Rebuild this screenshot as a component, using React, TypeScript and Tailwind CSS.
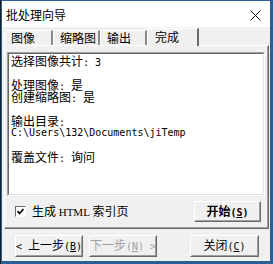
import React from "react";

// ascii runs use a half-width mono face, like the bitmap system font
function A({ children }: { children: React.ReactNode }) {
    return <span className="font-['DejaVu_Sans_Mono',monospace] text-[10px]">{children}</span>;
}

function U({ children }: { children: React.ReactNode }) {
    return <span className="underline underline-offset-[1px]">{children}</span>;
}

function Raised({ className, children }: { className?: string; children: React.ReactNode }) {
    return (
        <div className={"border border-t-white border-l-white border-r-[#696969] border-b-[#696969] bg-[#f0f0f0] " + (className ?? "")}>
            <div className="w-full h-full border border-t-[#f0f0f0] border-l-[#f0f0f0] border-r-[#a0a0a0] border-b-[#a0a0a0] flex items-center justify-center whitespace-nowrap">
                {children}
            </div>
        </div>
    );
}

const tabs = [
    { name: "图像", w: "w-[49px]" },
    { name: "缩略图", w: "w-[47px]" },
    { name: "输出", w: "w-[47px]" },
];

export default function App() {
    return (
        <div className="w-[273px] h-[264px] border-l border-[#1c1c1c] font-['Noto_Sans_CJK_SC',sans-serif] text-[12px] leading-[12px] text-black">
            <div className="w-full h-full flex flex-col border-l border-t border-r-[3px] border-b-[3px] border-[#2b5f93] bg-[#f0f0f0]">
                {/* title bar */}
                <div className="h-[26px] bg-white flex items-center justify-between pl-[4px] pr-[9px] shrink-0">
                    <span className="text-[12px] pt-[1px]">批处理向导</span>
                    <svg width="11" height="11" viewBox="0 0 11 11" className="mt-[2px]">
                        <path d="M0.5 0.5 L10.5 10.5 M10.5 0.5 L0.5 10.5" stroke="#111" strokeWidth="1" />
                    </svg>
                </div>

                {/* tab control */}
                <div className="ml-[2px] mr-[1px] mt-[1px] flex flex-col">
                    <div className="h-[17px] flex items-end">
                        {tabs.map((t) => (
                            <div key={t.name} className={t.w + " h-[15px] pl-[6px] flex items-center border-t border-l border-t-white border-l-white border-r-2 border-r-[#8a8a8a]"}>
                                {t.name}
                            </div>
                        ))}
                        <div className="w-[52px] h-[18px] pl-[7px] pb-[2px] flex items-center bg-[#f0f0f0] border-t border-l border-t-white border-l-white border-r-2 border-r-[#696969] -mb-px relative z-10">
                            完成
                        </div>
                    </div>

                    <div className="h-[184px] border border-t-white border-l-white border-r-[#696969] border-b-[#696969]">
                        <div className="w-full h-full border-r border-b border-r-[#a0a0a0] border-b-[#a0a0a0] flex flex-col">
                            {/* edit box */}
                            <div className="ml-[2px] mr-[2px] mt-[6px] h-[144px] border border-t-[#a0a0a0] border-l-[#a0a0a0] border-r-white border-b-white">
                                <div className="w-full h-full border border-t-[#696969] border-l-[#696969] border-r-[#e3e3e3] border-b-[#e3e3e3] bg-white pl-[2px] pt-[1px] flex flex-col">
                                    <div className="h-[12px]">选择图像共计<A>: 3</A></div>
                                    <div className="h-[12px]" />
                                    <div className="h-[12px]">处理图像<A>: </A>是</div>
                                    <div className="h-[12px]">创建缩略图<A>: </A>是</div>
                                    <div className="h-[12px]" />
                                    <div className="h-[12px]">输出目录<A>:</A></div>
                                    <div className="h-[12px] flex items-center"><A>C:\Users\132\Documents\jiTemp</A></div>
                                    <div className="h-[12px]" />
                                    <div className="h-[12px]">覆盖文件<A>: </A>询问</div>
                                </div>
                            </div>

                            {/* checkbox + start */}
                            <div className="mt-[5px] flex items-center justify-between pl-[10px] pr-[6px]">
                                <div className="flex items-center gap-[6px]">
                                    <div className="w-[11px] h-[11px] border border-t-[#696969] border-l-[#696969] border-r-white border-b-white bg-white flex items-center justify-center">
                                        <svg width="7" height="7" viewBox="0 0 7 7">
                                            <path d="M0.5 3 L2.5 5.5 L6.5 1" stroke="#000" strokeWidth="1.6" fill="none" />
                                        </svg>
                                    </div>
                                    <span className="whitespace-nowrap">生成 <span className="font-['Liberation_Serif',serif] text-[11px]">HTML</span> 索引页</span>
                                </div>
                                <Raised className="w-[67px] h-[21px]">
                                    <span className="font-bold">开始<A>(<U>S</U>)</A></span>
                                </Raised>
                            </div>
                        </div>
                    </div>
                </div>

                {/* bottom buttons */}
                <div className="mt-[6px] flex items-center pl-[13px] pr-[11px]">
                    <Raised className="w-[68px] h-[22px]">
                        <span><A>&lt; </A>上一步<A>(<U>B</U>)</A></span>
                    </Raised>
                    <Raised className="w-[68px] h-[22px] ml-[6px]">
                        <span className="text-[#a0a0a0]">下一步<A>(<U>N</U>) &gt;</A></span>
                    </Raised>
                    <div className="flex-1" />
                    <Raised className="w-[69px] h-[22px]">
                        <span>关闭<A>(<U>C</U>)</A></span>
                    </Raised>
                </div>
            </div>
        </div>
    );
}
